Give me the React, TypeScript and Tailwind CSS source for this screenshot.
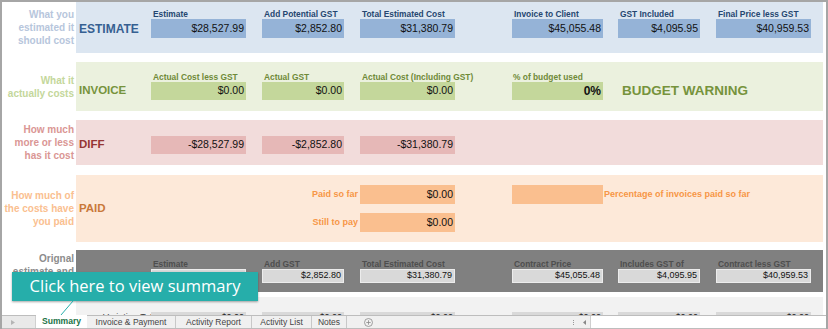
import React from "react";

type Col = { w: string; ml: string };
const cols: Col[] = [
  { w: "w-[95px]", ml: "ml-0" },
  { w: "w-[82px]", ml: "ml-[16px]" },
  { w: "w-[95px]", ml: "ml-[16px]" },
  { w: "w-[91px]", ml: "ml-[57px]" },
  { w: "w-[82px]", ml: "ml-[15px]" },
  { w: "w-[95px]", ml: "ml-[16px]" },
];

function LeftLabel({ lines, color }: { lines: string[]; color: string }) {
  return (
    <div className={`w-[74px] shrink-0 flex flex-col items-end justify-center pr-[2px] text-right text-[10px] font-bold leading-[13px] ${color}`}>
      {lines.map((l) => (
        <div key={l} className="whitespace-nowrap">{l}</div>
      ))}
    </div>
  );
}

function Field({
  col,
  label,
  value,
  labelColor,
  cellClass,
}: {
  col: Col;
  label?: string;
  value: string;
  labelColor: string;
  cellClass: string;
}) {
  return (
    <div className={`flex flex-col shrink-0 ${col.w} ${col.ml}`}>
      {label !== undefined && (
        <div className={`h-[10px] leading-[10px] text-[8.4px] font-bold pl-[2px] whitespace-nowrap ${labelColor}`}>{label}</div>
      )}
      <div className={`flex items-center justify-end pr-[2px] text-[#111] ${cellClass}`}>{value}</div>
    </div>
  );
}

export default function App() {
  return (
    <div className="w-[828px] h-[329px] relative overflow-hidden bg-white border-l-2 border-r-2 border-t-2 border-[#a6a6a6] flex flex-col font-['Liberation_Sans',Arial,sans-serif]">
      <div className="h-[313px] overflow-hidden flex flex-col">
        {/* ESTIMATE */}
        <div className="flex h-[51px] shrink-0">
          <LeftLabel lines={["What you", "estimated it", "should cost"]} color="text-[#b7c6dc]" />
          <div className="flex-1 mr-[3px] bg-[#dce6f1] pt-[7px] flex">
            <div className="w-[75px] shrink-0 pl-[3px] flex flex-col">
              <div className="h-[10px]" />
              <div className="h-[19px] flex items-center text-[12px] font-bold text-[#366092]">ESTIMATE</div>
            </div>
            {[
              ["Estimate", "$28,527.99"],
              ["Add Potential GST", "$2,852.80"],
              ["Total Estimated Cost", "$31,380.79"],
              ["Invoice to Client", "$45,055.48"],
              ["GST Included", "$4,095.95"],
              ["Final Price less GST", "$40,959.53"],
            ].map(([l, v], i) => (
              <Field key={l} col={cols[i]} label={l} value={v} labelColor="text-[#254670]" cellClass="h-[19px] bg-[#95b3d7] text-[10.5px]" />
            ))}
          </div>
        </div>

        {/* INVOICE */}
        <div className="flex h-[49px] mt-[9px] shrink-0">
          <LeftLabel lines={["What it", "actually costs"]} color="text-[#c4d79b]" />
          <div className="flex-1 mr-[3px] bg-[#ebf1de] pt-[10px] flex">
            <div className="w-[75px] shrink-0 pl-[3px] flex flex-col">
              <div className="h-[10px]" />
              <div className="h-[18px] flex items-center text-[11.5px] font-bold text-[#76933c]">INVOICE</div>
            </div>
            {[
              ["Actual Cost less GST", "$0.00"],
              ["Actual GST", "$0.00"],
              ["Actual Cost (Including GST)", "$0.00"],
            ].map(([l, v], i) => (
              <Field key={l} col={cols[i]} label={l} value={v} labelColor="text-[#6f8a38]" cellClass="h-[18px] bg-[#c4d79b] text-[10.5px]" />
            ))}
            <div className={`flex flex-col shrink-0 ${cols[3].w} ${cols[3].ml}`}>
              <div className="h-[10px] leading-[10px] text-[8.4px] font-bold pl-[1px] whitespace-nowrap text-[#6f8a38]">% of budget used</div>
              <div className="h-[18px] bg-[#c4d79b] flex items-center justify-end pr-[2px] text-[12px] font-bold text-[#111]">0%</div>
            </div>
            <div className="flex flex-col ml-[19px]">
              <div className="h-[10px]" />
              <div className="h-[18px] flex items-center text-[13.5px] font-bold text-[#76933c] whitespace-nowrap">BUDGET WARNING</div>
            </div>
          </div>
        </div>

        {/* DIFF */}
        <div className="flex h-[45px] mt-[9px] shrink-0">
          <LeftLabel lines={["How much", "more or less", "has it cost"]} color="text-[#da9694]" />
          <div className="flex-1 mr-[3px] bg-[#f2dcdb] pt-[16px] flex">
            <div className="w-[75px] shrink-0 pl-[3px] h-[18px] flex items-center text-[11.5px] font-bold text-[#963634]">DIFF</div>
            {["-$28,527.99", "-$2,852.80", "-$31,380.79"].map((v, i) => (
              <Field key={v} col={cols[i]} value={v} labelColor="" cellClass="h-[18px] bg-[#e6b8b7] text-[10.5px]" />
            ))}
          </div>
        </div>

        {/* PAID */}
        <div className="flex h-[67px] mt-[10px] shrink-0">
          <LeftLabel lines={["How much of", "the costs have", "you paid"]} color="text-[#fac090]" />
          <div className="flex-1 mr-[3px] bg-[#fde9d9] flex">
            <div className="w-[75px] shrink-0 pl-[3px] flex items-center text-[11.5px] font-bold text-[#c9783a]">PAID</div>
            <div className="w-[207px] shrink-0 pt-[10px] flex flex-col gap-[9px] text-[9px] font-bold text-[#f79646]">
              <div className="h-[19px] flex items-center justify-end">Paid so far</div>
              <div className="h-[19px] flex items-center justify-end">Still to pay</div>
            </div>
            <div className="w-[95px] ml-[2px] shrink-0 pt-[10px] flex flex-col gap-[9px] text-[10.5px] text-[#111]">
              <div className="h-[19px] bg-[#fabf8f] flex items-center justify-end pr-[2px]">$0.00</div>
              <div className="h-[19px] bg-[#fabf8f] flex items-center justify-end pr-[2px]">$0.00</div>
            </div>
            <div className="ml-[57px] pt-[10px] flex items-start">
              <div className="w-[91px] h-[19px] bg-[#fabf8f] shrink-0" />
              <div className="h-[19px] ml-[1px] flex items-center text-[9px] font-bold text-[#f79646] whitespace-nowrap">Percentage of invoices paid so far</div>
            </div>
          </div>
        </div>

        {/* ORIGINAL */}
        <div className="flex h-[42px] mt-[8px] shrink-0">
          <LeftLabel lines={["Orignal", "estimate and", "variations"]} color="text-[#8c8c8c]" />
          <div className="flex-1 mr-[3px] bg-[#808080] pt-[9px] flex">
            <div className="w-[75px] shrink-0" />
            {[
              ["Estimate", ""],
              ["Add GST", "$2,852.80"],
              ["Total Estimated Cost", "$31,380.79"],
              ["Contract Price", "$45,055.48"],
              ["Includes GST of", "$4,095.95"],
              ["Contract less GST", "$40,959.53"],
            ].map(([l, v], i) => (
              <Field key={l} col={cols[i]} label={l} value={v} labelColor="text-[#4e4e4e]" cellClass="h-[14px] bg-[#d9d9d9] border border-[#ececec] text-[9px]" />
            ))}
          </div>
        </div>

        {/* VARIATIONS */}
        <div className="flex h-[30px] mt-[5px] shrink-0">
          <div className="w-[74px] shrink-0" />
          <div className="flex-1 mr-[3px] bg-[#f2f2f2] pt-[15px] flex">
            <div className="w-[75px] shrink-0 pl-[27px] text-[9px] leading-[9px] pt-[1px] text-[#404040] whitespace-nowrap">Variation Total</div>
            {["$0.00", "$0.00", "$0.00", "$0.00", "$0.00", "$0.00"].map((v, i) => (
              <div key={i} className={`shrink-0 h-[14px] bg-[#d9d9d9] text-[9px] leading-[9px] pt-[1px] text-right pr-[2px] text-[#222] ${cols[i].w} ${cols[i].ml}`}>{v}</div>
            ))}
          </div>
        </div>
      </div>

      {/* Tab bar */}
      <div className="h-[14px] shrink-0 border-t border-b border-[#bdbdbd] bg-[#f0f0f0] flex items-stretch text-[8.5px] text-[#444] leading-none">
        <div className="w-[34px] shrink-0 flex items-center pl-[9px] bg-[#e9e9e9] border-r border-[#d0d0d0]">
          <svg width="4" height="5" viewBox="0 0 4 5"><path d="M0 0 L4 2.5 L0 5 Z" fill="#b5b5b5" /></svg>
        </div>
        <div className="w-[51px] shrink-0 bg-white flex items-center justify-center font-bold text-[#217346] text-[8.6px] -mt-px">Summary</div>
        <div className="w-[89px] shrink-0 flex items-center justify-center border-r border-[#c8c8c8]">Invoice &amp; Payment</div>
        <div className="w-[76px] shrink-0 flex items-center justify-center border-r border-[#c8c8c8]">Activity Report</div>
        <div className="w-[60px] shrink-0 flex items-center justify-center border-r border-[#c8c8c8]">Activity List</div>
        <div className="w-[35px] shrink-0 flex items-center justify-center border-r border-[#c8c8c8]">Notes</div>
        <div className="ml-[16px] w-[10px] flex items-center justify-center">
          <svg width="9" height="9" viewBox="0 0 9 9">
            <circle cx="4.5" cy="4.5" r="4" fill="none" stroke="#8a8a8a" strokeWidth="0.8" />
            <path d="M4.5 2.3 V6.7 M2.3 4.5 H6.7" stroke="#8a8a8a" strokeWidth="0.8" />
          </svg>
        </div>
        <div className="ml-[199px] w-[3px] flex flex-col items-center justify-center gap-[1px]">
          <div className="w-[1px] h-[1px] bg-[#999]" />
          <div className="w-[1px] h-[1px] bg-[#999]" />
          <div className="w-[1px] h-[1px] bg-[#999]" />
        </div>
        <div className="ml-[8px] flex items-center">
          <svg width="3" height="5" viewBox="0 0 3 5"><path d="M3 0 L0 2.5 L3 5 Z" fill="#888" /></svg>
        </div>
        <div className="ml-[4px] flex-1 bg-white border-l border-[#cfcfcf]" />
      </div>

      {/* Callout */}
      <div className="absolute left-[10px] top-[270px] w-[246px] h-[29px] bg-[#26aeaa] shadow-[0_1px_2px_rgba(0,0,0,0.35)] flex items-center justify-center text-white text-[16.5px] font-['Open_Sans','Noto_Sans',sans-serif] whitespace-nowrap">
        Click here to view summary
      </div>
      <svg className="absolute left-[56px] top-[299px]" width="18" height="16" viewBox="0 0 18 16">
        <line x1="15" y1="0" x2="3" y2="14" stroke="#26aeaa" strokeWidth="1" />
      </svg>
    </div>
  );
}
